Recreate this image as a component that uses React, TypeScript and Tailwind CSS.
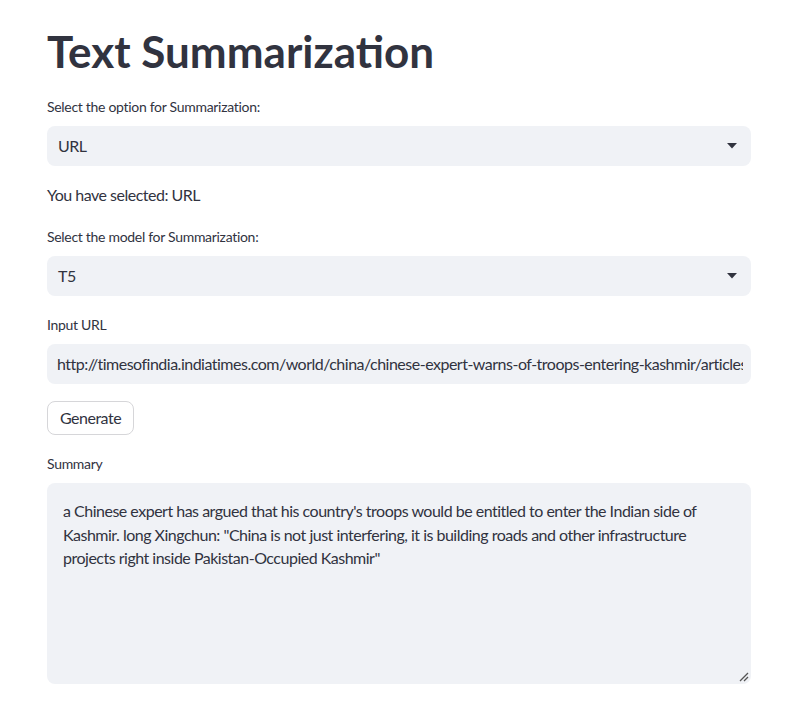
import React from "react";

const Caret = () => (
  <svg width="10" height="6" viewBox="0 0 10 6" className="shrink-0">
    <path d="M0 0 L10 0 L5 5.5 Z" fill="#31333f" />
  </svg>
);

function Select({ value }: { value: string }) {
  return (
    <div className="flex h-10 items-center justify-between rounded-lg bg-[#f0f2f6] pl-[11px] pr-[14px] text-base tracking-[-0.5px] text-[#31333f]">
      <span>{value}</span>
      <Caret />
    </div>
  );
}

function Label({ children }: { children: React.ReactNode }) {
  return <div className="mb-[9px] text-sm leading-[20px] tracking-[-0.3px] text-[#31333f]">{children}</div>;
}

export default function App() {
  return (
    <div
      className="min-h-screen bg-white text-[#31333f]"
      style={{ fontFamily: '"Lato", "Noto Sans", sans-serif' }}
    >
      <div className="ml-[47px] w-[704px] pt-[25px]">
        <h1 className="mb-[20px] text-[44px] font-bold leading-[52px] text-[#31333f]">Text Summarization</h1>
        <Label>Select the option for Summarization:</Label>
        <Select value="URL" />
        <div className="mt-[18px] mb-[21px] text-base leading-[22px] tracking-[-0.5px]">You have selected: URL</div>
        <Label>Select the model for Summarization:</Label>
        <Select value="T5" />
        <div className="mt-[19px]">
          <Label>Input URL</Label>
        </div>
        <div className="flex h-10 items-center overflow-hidden whitespace-nowrap rounded-lg bg-[#f0f2f6] pl-[10px] pr-[8px] text-base tracking-[-0.5px]">
          <span className="overflow-hidden">http://timesofindia.indiatimes.com/world/china/chinese-expert-warns-of-troops-entering-kashmir/articleshow/53561395.cms</span>
        </div>
        <button className="mt-[17px] flex h-[34px] items-center rounded-lg border border-[#d6d6d9] bg-white px-3 text-base tracking-[-0.5px] text-[#31333f]">
          Generate
        </button>
        <div className="mt-[19px]">
          <Label>Summary</Label>
        </div>
        <div className="relative h-[201px] rounded-lg bg-[#f0f2f6] px-4 pt-[16px] text-base leading-[23.5px] tracking-[-0.5px]">
          a Chinese expert has argued that his country's troops would be entitled to enter the Indian side of Kashmir. long Xingchun: "China is not just interfering, it is building roads and other infrastructure projects right inside Pakistan-Occupied Kashmir"
          <svg width="10" height="10" viewBox="0 0 10 10" className="absolute bottom-[2px] right-[2px]">
            <path d="M9 1 L1 9 M9 5 L5 9" stroke="#555" strokeWidth="1.3" />
          </svg>
        </div>
      </div>
    </div>
  );
}
